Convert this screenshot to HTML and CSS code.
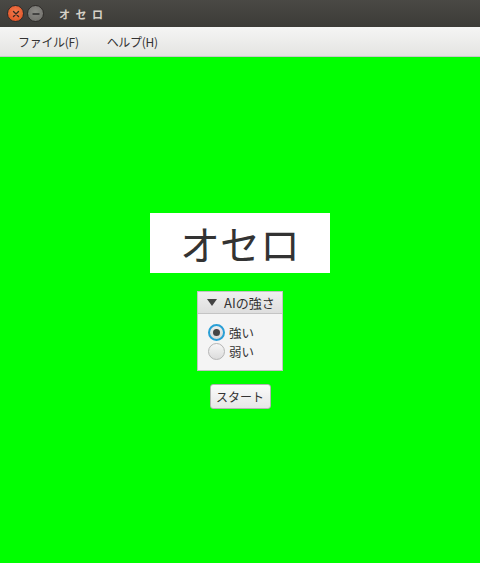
FILE: index.html
```html
<!DOCTYPE html>
<html>
<head>
<meta charset="utf-8">
<link rel="stylesheet" href="styles.css">
</head>
<body>
<div class="window">
  <div class="titlebar">
    <span class="wbtn close"><svg width="10" height="10" viewBox="0 0 10 10"><path d="M2.5 2.5 L7.5 7.5 M7.5 2.5 L2.5 7.5" stroke="#3a2a20" stroke-width="1.4" stroke-linecap="round"/></svg></span>
    <span class="wbtn min"><svg width="10" height="10" viewBox="0 0 10 10"><path d="M2 5 H8" stroke="#2e2e2e" stroke-width="1.4" stroke-linecap="round"/></svg></span>
    <span class="wtitle">オ セ ロ</span>
  </div>
  <div class="menubar">
    <span class="menu">ファイル(F)</span>
    <span class="menu">ヘルプ(H)</span>
  </div>
  <div class="board">
    <div class="logo">オセロ</div>
    <div class="pane">
      <div class="pane-head"><span class="arrow"></span>AIの強さ</div>
      <div class="pane-body">
        <div class="radio-row"><span class="radio on"></span>強い</div>
        <div class="radio-row"><span class="radio"></span>弱い</div>
      </div>
    </div>
    <div class="btn">スタート</div>
  </div>
</div>
</body>
</html>
```
FILE: styles.css
```css
html, body {
  margin: 0;
  padding: 0;
  width: 480px;
  height: 563px;
  overflow: hidden;
  font-family: "Noto Sans CJK JP", "Noto Sans", sans-serif;
}
.window {
  display: flex;
  flex-direction: column;
  height: 563px;
}
.titlebar {
  height: 27px;
  background: linear-gradient(#4a4945, #3c3b37);
  display: flex;
  align-items: center;
  padding-left: 7px;
  gap: 3px;
  box-sizing: border-box;
}
.wbtn {
  width: 17px;
  height: 17px;
  border-radius: 50%;
  display: flex;
  align-items: center;
  justify-content: center;
  box-sizing: border-box;
}
.close {
  background: radial-gradient(circle at 50% 40%, #f47a4e, #dc4c1e);
  border: 1px solid #2f2d2a;
}
.min {
  background: radial-gradient(circle at 50% 40%, #8c8b86, #6c6b67);
  border: 1px solid #2f2d2a;
}
.wtitle {
  margin-left: 12px;
  color: #d6d2c8;
  font-size: 11px;
  font-weight: bold;
  letter-spacing: 1.5px;
}
.menubar {
  height: 30px;
  background: linear-gradient(#f5f5f4, #e4e4e2);
  display: flex;
  align-items: center;
  padding-left: 18px;
  gap: 28px;
  font-size: 12px;
  letter-spacing: -0.3px;
  color: #333;
  box-sizing: border-box;
  border-bottom: 1px solid #c8c8c8;
}
.board {
  flex: 1;
  background: #00ff00;
  display: flex;
  flex-direction: column;
  align-items: center;
  justify-content: center;
  padding-top: 2px;
}
.logo {
  width: 180px;
  height: 60px;
  background: #fff;
  color: #333;
  font-size: 40px;
  display: flex;
  align-items: center;
  justify-content: center;
  line-height: 1;
}
.pane {
  margin-top: 18px;
  width: 86px;
  height: 80px;
  box-sizing: border-box;
  border: 1px solid #c2c2c2;
  background: #f4f4f4;
  display: flex;
  flex-direction: column;
}
.pane-head {
  height: 21px;
  background: linear-gradient(#efefef, #dedede);
  border-bottom: 1px solid #c4c4c4;
  font-size: 13px;
  color: #333;
  display: flex;
  align-items: center;
  padding-left: 9px;
  gap: 7px;
}
.arrow {
  width: 0;
  height: 0;
  border-left: 5px solid transparent;
  border-right: 5px solid transparent;
  border-top: 7px solid #444;
}
.pane-body {
  padding: 10px 0 0 10px;
  display: flex;
  flex-direction: column;
  gap: 2px;
}
.radio-row {
  display: flex;
  align-items: center;
  gap: 4px;
  font-size: 12.5px;
  color: #333;
  height: 17px;
}
.radio {
  width: 17px;
  height: 17px;
  box-sizing: border-box;
  border-radius: 50%;
  border: 1px solid #b5b5b5;
  background: linear-gradient(#f6f6f6, #dcdcdc);
  position: relative;
}
.radio.on {
  border: 2px solid #2a9fd6;
  background: linear-gradient(#eeeeee, #d8d8d8);
}
.radio.on::after {
  content: "";
  position: absolute;
  left: 3px;
  top: 3px;
  width: 7px;
  height: 7px;
  border-radius: 50%;
  background: #444;
}
.btn {
  margin-top: 13px;
  width: 61px;
  height: 25px;
  box-sizing: border-box;
  border: 1px solid #b4b4b4;
  border-radius: 3px;
  background: linear-gradient(#fbfbfb, #e6e6e6);
  font-size: 12px;
  color: #333;
  display: flex;
  align-items: center;
  justify-content: center;
}
```
